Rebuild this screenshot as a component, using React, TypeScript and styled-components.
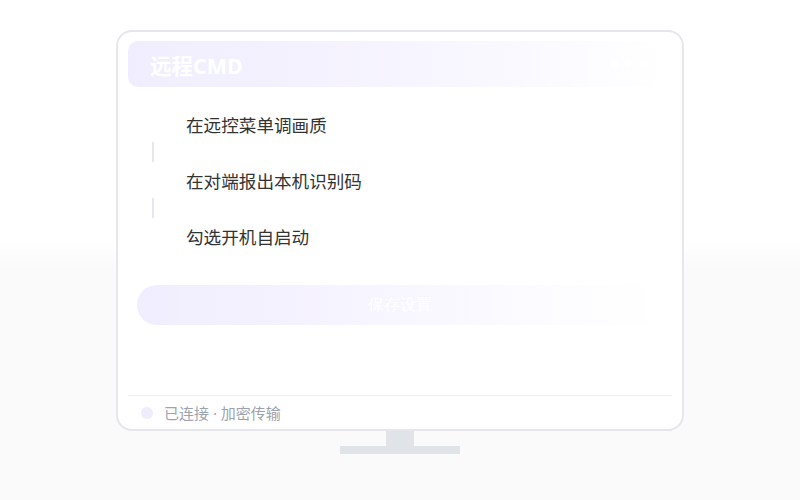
import styled, { createGlobalStyle } from "styled-components";

const GlobalStyle = createGlobalStyle`
  html, body {
    margin: 0;
    height: 100%;
  }
  body {
    font-family: "Noto Sans", "Noto Sans CJK SC", sans-serif;
    background: linear-gradient(180deg, #ffffff 0%, #ffffff 48%, #fafafb 54%, #fafafb 100%);
  }
`;

const Page = styled.div`
  display: flex;
  flex-direction: column;
  align-items: center;
  padding-top: 30px;
  height: 500px;
  box-sizing: border-box;
`;

const Screen = styled.div`
  width: 568px;
  height: 401px;
  box-sizing: border-box;
  border: 2px solid #e5e7eb;
  border-radius: 16px;
  background: #fff;
  padding: 9px 10px 0;
  display: flex;
  flex-direction: column;
`;

const Header = styled.div`
  height: 46px;
  border-radius: 10px;
  background: linear-gradient(90deg, #f0edfe 0%, #f7f5ff 55%, rgba(255, 255, 255, 0) 100%);
  display: flex;
  align-items: center;
  justify-content: space-between;
  padding: 0 22px;
`;

const Title = styled.div`
  color: #fff;
  font-size: 21.5px;
  font-weight: 700;
`;

const Dots = styled.div`
  display: flex;
  gap: 6px;
  margin-right: 4px;
`;

const Dot = styled.span`
  width: 8px;
  height: 8px;
  border-radius: 50%;
  background: #fff;
`;

const Steps = styled.div`
  display: flex;
  flex-direction: column;
  margin-top: 19px;
  padding-left: 13px;
`;

const StepRow = styled.div`
  display: flex;
  align-items: center;
  height: 36px;
  gap: 21px;
`;

const StepMark = styled.span`
  width: 24px;
  height: 24px;
  border-radius: 50%;
  background: #fff;
`;

const StepText = styled.span`
  font-size: 17.6px;
  color: #333;
`;

const Connector = styled.div`
  width: 2px;
  height: 20px;
  margin-left: 11px;
  background: #e6e7ec;
`;

const SaveButton = styled.button`
  margin: 31px 10px 0 9px;
  height: 40px;
  border: none;
  border-radius: 20px;
  background: linear-gradient(90deg, #f0edfe 0%, #f6f4ff 40%, #fbfaff 70%, rgba(255, 255, 255, 0) 100%);
  color: #fff;
  font-family: serif;
  font-size: 16px;
  padding: 0;
`;

const Footer = styled.div`
  margin-top: auto;
  border-top: 1px solid #eef0f3;
  height: 33px;
  display: flex;
  align-items: center;
  gap: 11px;
  padding-left: 13px;
`;

const StatusDot = styled.span`
  width: 12px;
  height: 12px;
  border-radius: 50%;
  background: #efecfd;
`;

const StatusText = styled.span`
  font-size: 15px;
  color: #9ca3af;
`;

const Neck = styled.div`
  width: 28px;
  height: 15px;
  background: #e0e3e8;
`;

const Base = styled.div`
  width: 120px;
  height: 8px;
  background: #e0e3e8;
`;

const steps = ["在远控菜单调画质", "在对端报出本机识别码", "勾选开机自启动"];

const App = () => {
  return (
    <Page>
      <GlobalStyle />
      <Screen>
        <Header>
          <Title>远程CMD</Title>
          <Dots>
            <Dot />
            <Dot />
            <Dot />
          </Dots>
        </Header>
        <Steps>
          {steps.map((s, i) => (
            <div key={s}>
              {i > 0 && <Connector />}
              <StepRow>
                <StepMark />
                <StepText>{s}</StepText>
              </StepRow>
            </div>
          ))}
        </Steps>
        <SaveButton>保存设置</SaveButton>
        <Footer>
          <StatusDot />
          <StatusText>已连接 · 加密传输</StatusText>
        </Footer>
      </Screen>
      <Neck />
      <Base />
    </Page>
  );
};

export default App;
